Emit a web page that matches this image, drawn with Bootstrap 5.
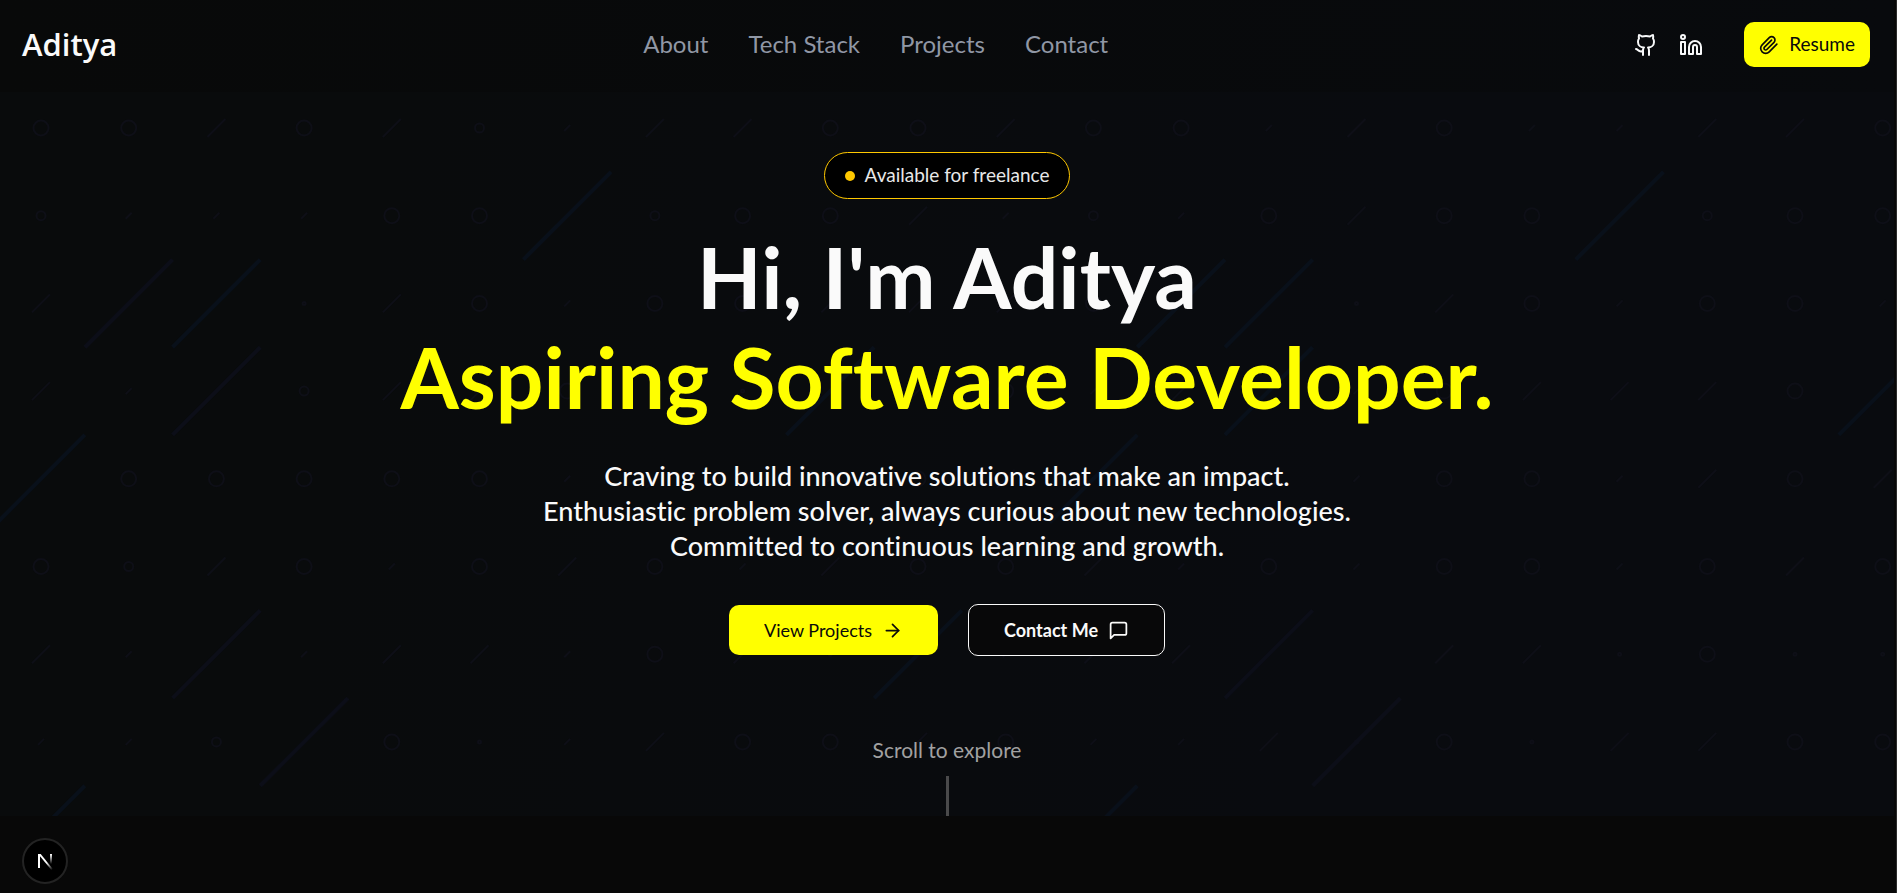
<!DOCTYPE html>
<html lang="en">
<head>
<meta charset="utf-8">
<meta name="viewport" content="width=device-width, initial-scale=1">
<title>Aditya</title>
<link href="https://cdn.jsdelivr.net/npm/bootstrap@5.3.0/dist/css/bootstrap.min.css" rel="stylesheet">
<style>
  body { background: #080808; color: #fafafa; font-family: Lato, "Open Sans", sans-serif; font-variant-ligatures: none; min-height: 100vh; padding-right: 2px; border-right: 1px solid #2b2b2b; }
  svg.ico { fill: none; stroke: currentColor; stroke-width: 2; stroke-linecap: round; stroke-linejoin: round; flex: none; }
  .topbar { background: linear-gradient(90deg, #080909, #080a0d); padding: 22px 24px 25px 22px; min-height: 92px; }
  .topbar .navbar-brand { font: 600 31px/45px "Open Sans", sans-serif; color: #fafafa; margin: 0; padding: 0; }
  .menu { gap: 40px; font-size: 24px; line-height: 42px; padding-bottom: 2px; }
  .menu a { color: #9097a5; text-decoration: none; }
  .social { gap: 21px; margin-right: 41px; }
  .btn-yellow { background: #ff0; color: #0a0a0a; --bs-btn-hover-bg: #e6e600; --bs-btn-hover-color: #0a0a0a; border: 0; border-radius: 10px; }
  .btn-resume { font-size: 19px; height: 45px; padding: 0 15px; gap: 10px; }
  .hero { background: linear-gradient(100deg, #090b0c 20%, #090b0f 70%); padding-top: 60px; }
  .backdrop { inset: 0; }
  .backdrop .stroke-long { stroke: #09101a; stroke-width: 4; }
  .backdrop .stroke-long.violet { stroke: #0c0e18; }
  .backdrop .tiny { stroke: #0e0f17; stroke-width: 2; fill: none; }
  .pill { height: 47px; padding: 0 20px; gap: 10px; border: 1px solid #ffc800; border-radius: 24px; background: #000; font-size: 19px; color: #e8e8e8; }
  .pill-dot { width: 10px; height: 10px; background: #ffc800; }
  .headline { font-size: 84px; line-height: 100px; font-weight: 700; margin: 28px 0 31px; }
  .headline span { color: #ff0; }
  .intro { font-size: 27px; line-height: 35px; font-weight: 500; margin-bottom: 41px; }
  .actions { gap: 30px; }
  .btn-cta { font-size: 18px; height: 50px; padding: 0 35px; gap: 10px; }
  .btn-line { height: 52px; border: 1px solid #fafafa; border-radius: 10px; background: #080809; color: #fafafa; font-weight: 700; --bs-btn-hover-bg: #1a1a1a; --bs-btn-hover-color: #fafafa; }
  .explore { font-size: 21px; line-height: 30px; color: #a1a1a1; margin-top: 79px; }
  .explore-bar { width: 3px; height: 40px; margin-top: 11px; background: #4a4a4b; }
  .dev-badge { left: 22px; bottom: 9px; width: 46px; height: 46px; background: #000; border: 2px solid #232323; }
</style>
</head>
<body>
<nav class="topbar d-flex flex-wrap align-items-center justify-content-between">
  <a class="navbar-brand" href="#">Aditya</a>
  <div class="menu d-flex flex-wrap">
    <a href="#about">About</a><a href="#tech">Tech Stack</a><a href="#projects">Projects</a><a href="#contact">Contact</a>
  </div>
  <div class="d-flex align-items-center">
    <div class="social d-flex">
      <a class="text-light d-flex" href="#" aria-label="GitHub"><svg class="ico" width="24" height="24" viewBox="0 0 24 24"><path d="M15 22v-4a4.8 4.8 0 0 0-1-3.5c3 0 6-2 6-5.5.08-1.25-.27-2.48-1-3.5.28-1.15.28-2.35 0-3.5 0 0-1 0-3 1.5-2.64-.5-5.36-.5-8 0C6 2 5 2 5 2c-.3 1.15-.3 2.35 0 3.5A5.403 5.403 0 0 0 4 9c0 3.5 3 5.5 6 5.5-.39.49-.68 1.05-.85 1.65-.17.6-.22 1.23-.15 1.85v4"/><path d="M9 18c-4.51 2-5-2-7-2"/></svg></a>
      <a class="text-light d-flex" href="#" aria-label="LinkedIn"><svg class="ico" width="24" height="24" viewBox="0 0 24 24"><path d="M16 8a6 6 0 0 1 6 6v7h-4v-7a2 2 0 0 0-2-2 2 2 0 0 0-2 2v7h-4v-7a6 6 0 0 1 6-6z"/><rect width="4" height="12" x="2" y="9"/><circle cx="4" cy="4" r="2"/></svg></a>
    </div>
    <button type="button" class="btn btn-yellow btn-resume d-flex align-items-center"><svg class="ico" width="20" height="20" viewBox="0 0 24 24"><path d="m21.44 11.05-9.19 9.19a6 6 0 0 1-8.49-8.49l8.57-8.57A4 4 0 1 1 18 8.84l-8.59 8.57a2 2 0 0 1-2.83-2.83l8.49-8.48"/></svg>Resume</button>
  </div>
</nav>

<main class="hero position-relative overflow-hidden">
  <svg class="backdrop position-absolute w-100 h-100" id="backdrop" aria-hidden="true"></svg>
  <div class="position-relative d-flex flex-column align-items-center text-center">
    <div class="pill d-flex align-items-center"><span class="pill-dot rounded-circle"></span>Available for freelance</div>
    <h1 class="headline">Hi, I'm Aditya<br><span>Aspiring Software Developer.</span></h1>
    <p class="intro">Craving to build innovative solutions that make an impact.<br>Enthusiastic problem solver, always curious about new technologies.<br>Committed to continuous learning and growth.</p>
    <div class="actions d-flex flex-wrap align-items-center justify-content-center">
      <button type="button" class="btn btn-yellow btn-cta d-flex align-items-center">View Projects<svg class="ico" width="21" height="21" viewBox="0 0 24 24"><path d="M5 12h14"/><path d="m12 5 7 7-7 7"/></svg></button>
      <button type="button" class="btn btn-cta btn-line d-flex align-items-center">Contact Me<svg class="ico" width="21" height="21" viewBox="0 0 24 24"><path d="M21 15a2 2 0 0 1-2 2H7l-4 4V5a2 2 0 0 1 2-2h14a2 2 0 0 1 2 2z"/></svg></button>
    </div>
    <div class="explore">Scroll to explore</div>
    <div class="explore-bar"></div>
  </div>
</main>

<button type="button" class="dev-badge position-fixed rounded-circle p-0 d-flex align-items-center justify-content-center" aria-label="Developer tools">
  <svg width="20" height="20" viewBox="0 0 20 20" fill="none">
    <defs>
      <linearGradient id="fadeDiag" x1="11" y1="12" x2="17" y2="19" gradientUnits="userSpaceOnUse"><stop stop-color="#fff"/><stop offset="1" stop-color="#fff" stop-opacity="0"/></linearGradient>
      <linearGradient id="fadeStem" x1="16" y1="3" x2="16" y2="13" gradientUnits="userSpaceOnUse"><stop stop-color="#fff"/><stop offset="1" stop-color="#fff" stop-opacity="0"/></linearGradient>
    </defs>
    <path d="M4 17V3" stroke="#fff" stroke-width="2"/>
    <path d="M3.5 3h2.2L18 18.2l-1.4 1L4 4z" fill="url(#fadeDiag)"/>
    <path d="M16 3v10" stroke="url(#fadeStem)" stroke-width="2"/>
  </svg>
</button>

<script src="https://cdn.jsdelivr.net/npm/bootstrap@5.3.0/dist/js/bootstrap.bundle.min.js"></script>
<script>
  // Faint motif behind the hero: O/o rings, L/s slashes, "." dots, one character per grid cell
  const rows = [
    "OOLOLosLLOOLOOsLOssLLO",
    "osssOO-oOOLsosOLOO-oOO",
    "L--.LOsOOLLLO--.LOsOOs",
    "Ls-oLLOs.-LOsL-sOLLLO-",
    "-OOOOOsLOsOL-OOsOOsLOL",
    "OoLOsOLOsLOOLsOsOOsOLO",
    "Ls-sLLsOL.-sLLs-LL.O..",
    "sso-O.sLOOLOssL.O.LLOO"
  ];
  const slashes = [[6,1],[18,1],[1,2,1],[2,2],[13,2],[14,2],[2,3,1],[9,3],[14,3],[21,3],[0,4],[12,4],[2,6,1],[10,6],[14,6,1],[3,7,1],[15,7,1],[0,8],[12,8]];
  const step = 87.7, left = 41, top0 = 36;
  let out = "";
  rows.forEach((row, r) => [...row].forEach((ch, c) => {
    const x = left + c * step, y = top0 + r * step;
    const slash = h => `<path class="tiny" d="M${x - h} ${y + h}L${x + h} ${y - h}"/>`;
    if (ch === "O") out += `<circle class="tiny" cx="${x}" cy="${y}" r="7.5"/>`;
    if (ch === "o") out += `<circle class="tiny" cx="${x}" cy="${y}" r="4.5"/>`;
    if (ch === ".") out += `<circle class="tiny" cx="${x}" cy="${y}" r="1.5"/>`;
    if (ch === "L") out += slash(9);
    if (ch === "s") out += slash(3);
  }));
  slashes.forEach(([c, r, violet]) => {
    const x = left + (c - .5) * step, y = top0 + (r + .5) * step;
    out += `<path class="stroke-long${violet ? " violet" : ""}" d="M${x} ${y}L${x + step} ${y - step}"/>`;
  });
  document.getElementById("backdrop").innerHTML = out;
</script>
</body>
</html>
